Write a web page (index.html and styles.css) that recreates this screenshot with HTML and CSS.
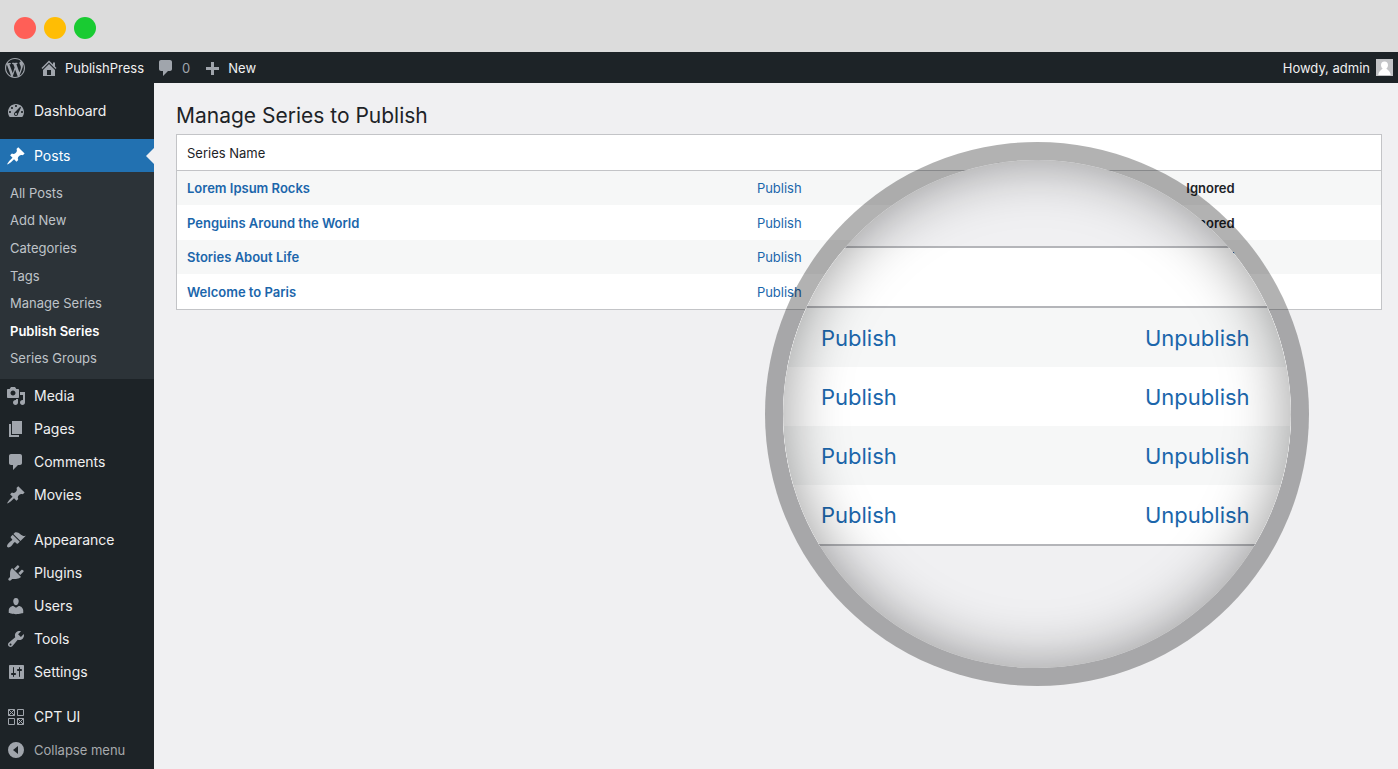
FILE: index.html
```html
<!DOCTYPE html>
<html lang="en">
<head>
  <meta charset="UTF-8">
  <meta name="viewport" content="width=device-width, initial-scale=1.0">
  <title>Manage Series to Publish - PublishPress</title>
  <link rel="stylesheet" href="styles.css">
</head>
<body>

<!-- Window title bar -->
<div class="window-bar">
  <span class="dot dot-red"></span>
  <span class="dot dot-yellow"></span>
  <span class="dot dot-green"></span>
</div>

<!-- Admin bar -->
<header class="admin-bar">
  <a href="#" class="bar-logo" aria-label="WordPress"><svg class="icon" viewBox="0 0 20 20"><path d="M20 10c0-5.51-4.49-10-10-10C4.48 0 0 4.49 0 10c0 5.52 4.48 10 10 10 5.51 0 10-4.48 10-10zM7.78 15.37L4.37 6.22c.55-.02 1.17-.08 1.17-.08.5-.06.44-1.13-.06-1.11 0 0-1.45.11-2.37.11-.18 0-.37 0-.58-.01C4.12 2.69 6.87 1.11 10 1.11c2.33 0 4.45.87 6.05 2.34-.68-.11-1.65.39-1.65 1.58 0 .74.45 1.36.9 2.1.35.61.55 1.36.55 2.46 0 1.49-1.4 5-1.4 5l-3.03-8.37c.54-.02.82-.17.82-.17.5-.05.44-1.25-.06-1.22 0 0-1.44.12-2.38.12-.87 0-2.33-.12-2.33-.12-.5-.03-.56 1.2-.06 1.22l.92.08 1.26 3.41zM17.41 10c.24-.64.74-1.87.43-4.25.7 1.29 1.05 2.71 1.05 4.25 0 3.29-1.73 6.24-4.4 7.78.97-2.59 1.94-5.2 2.92-7.78zM6.1 18.09C3.12 16.65 1.11 13.53 1.11 10c0-1.3.23-2.48.72-3.59C3.25 10.3 4.67 14.2 6.1 18.09zm4.03-6.63l2.58 6.98c-.86.29-1.76.45-2.71.45-.79 0-1.57-.11-2.29-.33.81-2.38 1.62-4.74 2.42-7.1z"/></svg></a>
  <a href="#"><svg class="icon" viewBox="0 0 20 20"><path d="M16 8.5l1.53 1.53-1.06 1.06L10 4.6l-6.47 6.49-1.06-1.06L10 2.5l4 4v-2h2v4zm-6-2.46l6 5.99V18H4v-5.97zM12 17v-5H8v5h4z"/></svg>PublishPress</a>
  <a href="#" class="bar-count"><svg class="icon" viewBox="0 0 20 20"><path d="M5 2h9c1.1 0 2 .9 2 2v7c0 1.1-.9 2-2 2h-2l-5 5v-5H5c-1.1 0-2-.9-2-2V4c0-1.1.9-2 2-2z"/></svg>0</a>
  <a href="#"><svg class="icon" viewBox="0 0 20 20"><path d="M17 9v3h-5v5H9v-5H4V9h5V4h3v5z"/></svg>New</a>
  <a href="#" class="bar-account">Howdy, admin
    <svg class="avatar" viewBox="0 0 17 17"><path fill="#c3c4c7" d="M0 0h17v17H0z"/><path fill="#fff" d="M8.500 2.500c2.300 0 3.600 1.700 3.500 3.700-.1 1.500-.7 2.600-1.600 3.300.2 1 3.900 2 4.300 6.500H2.300c.4-4.500 4.100-5.500 4.300-6.500C5.700 8.800 5.100 7.700 5 6.200c-.1-2 1.200-3.700 3.500-3.700z"/></svg>
  </a>
</header>

<div class="layout">
  <!-- Sidebar menu -->
  <nav class="sidebar">
    <ul class="menu">
      <li><a href="#"><svg class="icon" viewBox="0 0 20 20"><path fill-rule="evenodd" d="M3.760 16h12.480c1.100-1.370 1.760-3.110 1.760-5 0-4.420-3.580-8-8-8s-8 3.580-8 8c0 1.890.66 3.630 1.760 5zM10 4c.55 0 1 .45 1 1s-.45 1-1 1-1-.45-1-1 .45-1 1-1zM6 6c.55 0 1 .45 1 1s-.45 1-1 1-1-.45-1-1 .45-1 1-1zm8.200-.2l.8.700L12 13c0 1.100-.9 2-2 2s-2-.9-2-2c0-.57.24-1.080.63-1.450zM4 10c.55 0 1 .45 1 1s-.45 1-1 1-1-.45-1-1 .45-1 1-1zm12 0c.55 0 1 .45 1 1s-.45 1-1 1-1-.45-1-1 .45-1 1-1zm-5 3c0-.55-.45-1-1-1s-1 .45-1 1 .45 1 1 1 1-.45 1-1z"/></svg>Dashboard</a></li>
    </ul>

    <ul class="menu">
      <li>
        <a href="#" class="current"><svg class="icon" viewBox="0 0 20 20"><path d="M10.440 3.020l1.820-1.820 6.360 6.350-1.830 1.820c-1.050-.68-2.480-.57-3.410.36l-.75.75c-.92.93-1.040 2.350-.35 3.410l-1.830 1.820-2.410-2.410-2.800 2.790c-.42.42-3.380 2.710-3.800 2.290s1.860-3.390 2.280-3.810l2.790-2.790L4.100 9.360l1.830-1.820c1.050.69 2.480.57 3.400-.36l.75-.75c.93-.92 1.050-2.350.36-3.410z"/></svg>Posts</a>
        <ul class="submenu">
          <li><a href="#">All Posts</a></li>
          <li><a href="#">Add New</a></li>
          <li><a href="#">Categories</a></li>
          <li><a href="#">Tags</a></li>
          <li><a href="#">Manage Series</a></li>
          <li><a href="#" class="active">Publish Series</a></li>
          <li><a href="#">Series Groups</a></li>
        </ul>
      </li>
      <li><a href="#"><svg class="icon" viewBox="0 0 20 20"><path d="M13 11V4c0-.55-.45-1-1-1h-1.670L9 1H5L3.670 3H2c-.55 0-1 .45-1 1v7c0 .55.45 1 1 1h10c.55 0 1-.45 1-1zM7 4.500c1.380 0 2.500 1.120 2.500 2.500S8.380 9.500 7 9.500 4.500 8.380 4.500 7 5.620 4.500 7 4.500zM14 6h5v10.500c0 1.380-1.120 2.500-2.500 2.500S14 17.880 14 16.500s1.120-2.500 2.500-2.500c.17 0 .34.02.5.05V9h-3V6zm-4 8.050V13h2v3.500c0 1.380-1.120 2.500-2.500 2.500S7 17.880 7 16.500 8.120 14 9.500 14c.17 0 .34.02.5.05z"/></svg>Media</a></li>
      <li><a href="#"><svg class="icon" viewBox="0 0 20 20"><path d="M6 15V2h10v13H6zm-1 1h8v2H3V5h2v11z"/></svg>Pages</a></li>
      <li><a href="#"><svg class="icon" viewBox="0 0 20 20"><path d="M5 2h9c1.100 0 2 .9 2 2v7c0 1.100-.9 2-2 2h-2l-5 5v-5H5c-1.100 0-2-.9-2-2V4c0-1.100.9-2 2-2z"/></svg>Comments</a></li>
      <li><a href="#"><svg class="icon" viewBox="0 0 20 20"><path d="M10.440 3.020l1.820-1.820 6.360 6.350-1.830 1.820c-1.050-.68-2.480-.57-3.410.36l-.75.75c-.92.93-1.040 2.350-.35 3.410l-1.830 1.820-2.410-2.410-2.800 2.790c-.42.42-3.380 2.710-3.800 2.290s1.860-3.390 2.280-3.810l2.790-2.790L4.100 9.360l1.830-1.820c1.050.69 2.480.57 3.400-.36l.75-.75c.93-.92 1.050-2.350.36-3.410z"/></svg>Movies</a></li>
    </ul>

    <ul class="menu">
      <li><a href="#"><svg class="icon" viewBox="0 0 20 20"><path d="M14.480 11.060L7.410 3.990l1.500-1.500c.5-.56 2.300-.47 3.510.32 1.210.8 1.430 1.280 2.910 2.100 1.180.64 2.450 1.260 4.450.85zm-.71.71L6.700 4.700 4.930 6.470c-.39.39-.39 1.020 0 1.410l1.060 1.060c.39.39.39 1.030 0 1.420-.6.6-1.430 1.110-2.210 1.690-.35.26-.7.53-1.010.84C1.430 14.230.4 16.080 1.400 17.070c.99 1 2.840-.03 4.180-1.360.31-.31.58-.66.85-1.020.57-.78 1.080-1.610 1.690-2.210.39-.39 1.020-.39 1.410 0l1.060 1.060c.39.39 1.020.39 1.410 0z"/></svg>Appearance</a></li>
      <li><a href="#"><svg class="icon" viewBox="0 0 20 20"><path d="M13.110 4.360L9.870 7.600 8 5.730l3.240-3.240c.35-.34 1.050-.2 1.560.32.52.51.66 1.210.31 1.550zm-8 1.770l.91-1.120 9.010 9.010-1.190.84c-.71.71-2.630 1.160-3.820 1.160H6.140L4.900 17.260c-.59.59-1.540.59-2.120 0-.59-.58-.59-1.530 0-2.120l1.240-1.240v-3.880c0-1.130.4-3.190 1.090-3.890zm7.260 3.970l3.240-3.240c.34-.35 1.040-.21 1.550.31.52.51.66 1.210.31 1.550l-3.240 3.250z"/></svg>Plugins</a></li>
      <li><a href="#"><svg class="icon" viewBox="0 0 20 20"><path d="M10 9.250c-2.270 0-2.730-3.440-2.730-3.440C7 4.020 7.820 2 9.970 2c2.160 0 2.980 2.020 2.710 3.810 0 0-.41 3.440-2.680 3.440zm0 2.570L12.720 10c2.390 0 4.520 2.330 4.520 4.530v2.490s-3.650 1.130-7.240 1.130c-3.650 0-7.240-1.130-7.240-1.130v-2.490c0-2.250 1.940-4.480 4.470-4.480z"/></svg>Users</a></li>
      <li><a href="#"><svg class="icon" viewBox="0 0 20 20"><path d="M16.680 9.770c-1.340 1.340-3.300 1.670-4.950.99l-5.410 6.520c-.99.99-2.590.99-3.580 0s-.99-2.590 0-3.570l6.520-5.420c-.68-1.650-.35-3.610.99-4.950 1.280-1.280 3.120-1.620 4.720-1.060l-2.890 2.890 2.820 2.820 2.860-2.870c.53 1.580.18 3.390-1.080 4.650zM3.810 16.210c.4.39 1.040.39 1.430 0 .4-.4.4-1.040 0-1.430-.39-.4-1.030-.4-1.430 0-.39.39-.39 1.030 0 1.430z"/></svg>Tools</a></li>
      <li><a href="#"><svg class="icon" viewBox="0 0 20 20"><path fill-rule="evenodd" d="M18 16V4c0-.55-.45-1-1-1H4c-.55 0-1 .45-1 1v12c0 .55.45 1 1 1h13c.55 0 1-.45 1-1zM8 11h1c.55 0 1 .45 1 1s-.45 1-1 1H8v1.500c0 .28-.22.5-.5.5s-.5-.22-.5-.5V13H6c-.55 0-1-.45-1-1s.45-1 1-1h1V5.500c0-.28.22-.5.5-.5s.5.22.5.5V11zm5-2h-1c-.55 0-1-.45-1-1s.45-1 1-1h1V5.500c0-.28.22-.5.5-.5s.5.22.5.5V7h1c.55 0 1 .45 1 1s-.45 1-1 1h-1v5.500c0 .28-.22.5-.5.5s-.5-.22-.5-.5V9z"/></svg>Settings</a></li>
    </ul>

    <ul class="menu">
      <li><a href="#"><svg class="icon icon-line" viewBox="0 0 20 20"><path d="M2.500 2.500h6v6h-6zM11.500 2.500h6v6h-6zM2.500 11.500h6v6h-6zM11.500 11.500h6v6h-6zM2.500 2.500l6 6M8.500 2.500l-6 6M11.500 11.500l6 6M17.500 11.500l-6 6"/></svg>CPT UI</a></li>
      <li><button type="button" class="collapse-button"><svg class="icon" viewBox="0 0 20 20"><path fill-rule="evenodd" d="M10 2a8 8 0 1 1 0 16 8 8 0 0 1 0-16zm2 4l-5 4 5 4z"/></svg>Collapse menu</button></li>
    </ul>
  </nav>

  <!-- Page content -->
  <main class="content">
    <h1>Manage Series to Publish</h1>
    <table class="series-table">
      <thead>
        <tr>
          <th class="col-name">Series Name</th>
          <th class="col-publish"></th>
          <th class="col-unpublish"></th>
          <th class="col-ignored"></th>
        </tr>
      </thead>
      <tbody>
        <tr>
          <td><a href="#" class="series-link">Lorem Ipsum Rocks</a></td>
          <td><a href="#">Publish</a></td>
          <td></td>
          <td><strong>Ignored</strong></td>
        </tr>
        <tr>
          <td><a href="#" class="series-link">Penguins Around the World</a></td>
          <td><a href="#">Publish</a></td>
          <td></td>
          <td><strong>Ignored</strong></td>
        </tr>
        <tr>
          <td><a href="#" class="series-link">Stories About Life</a></td>
          <td><a href="#">Publish</a></td>
          <td></td>
          <td><strong>Ignored</strong></td>
        </tr>
        <tr>
          <td><a href="#" class="series-link">Welcome to Paris</a></td>
          <td><a href="#">Publish</a></td>
          <td></td>
          <td></td>
        </tr>
      </tbody>
    </table>

    <!-- Magnifying lens over the table -->
    <div class="lens">
      <table class="lens-table">
        <thead>
          <tr><th class="lens-publish"></th><th></th></tr>
        </thead>
        <tbody>
          <tr><td><a href="#">Publish</a></td><td><a href="#">Unpublish</a></td></tr>
          <tr><td><a href="#">Publish</a></td><td><a href="#">Unpublish</a></td></tr>
          <tr><td><a href="#">Publish</a></td><td><a href="#">Unpublish</a></td></tr>
          <tr><td><a href="#">Publish</a></td><td><a href="#">Unpublish</a></td></tr>
        </tbody>
      </table>
    </div>
  </main>
</div>

</body>
</html>
```
FILE: styles.css
```css
* {
  box-sizing: border-box;
}
body {
  display: flex;
  flex-direction: column;
  min-height: 100vh;
  margin: 0;
  background-color: #f0f0f2;
  color: #1d2327;
  font-family: Inter, "Liberation Sans", sans-serif;
  font-size: 13px;
}
a {
  color: #1b66ab;
  text-decoration: none;
}
ul {
  margin: 0;
  padding: 0;
  list-style: none;
}
.icon {
  flex: none;
  width: 20px;
  height: 20px;
  fill: #a0a5ac;
}
.icon-line {
  fill: none;
  stroke: #a0a5ac;
}

/* Window title bar */
.window-bar {
  display: flex;
  align-items: center;
  gap: 8px;
  height: 52px;
  padding: 3px 14px 0;
  background-color: #dcdcdc;
}
.dot {
  width: 22px;
  height: 22px;
  border-radius: 50%;
}
.dot-red {
  background-color: #ff5f57;
}
.dot-yellow {
  background-color: #ffbd04;
}
.dot-green {
  background-color: #19cb32;
}

/* Admin bar */
.admin-bar {
  display: flex;
  align-items: center;
  gap: 12px;
  height: 31px;
  padding: 0 5px;
  background-color: #1d2327;
}
.admin-bar a {
  display: flex;
  align-items: center;
  gap: 6px;
  color: #f0f0f1;
}
.admin-bar .bar-logo {
  padding-right: 2px;
}
.admin-bar .bar-count {
  color: #a0a5ac;
}
.admin-bar .bar-account {
  margin-left: auto;
}
.avatar {
  width: 17px;
  height: 17px;
}

/* Sidebar */
.layout {
  display: flex;
  flex: 1;
}
.sidebar {
  display: flex;
  flex: none;
  flex-direction: column;
  gap: 12px;
  width: 154px;
  padding-top: 11px;
  background-color: #1d2327;
  font-size: 14px;
}
.menu > li > a,
.collapse-button {
  display: flex;
  align-items: center;
  gap: 8px;
  width: 100%;
  height: 33px;
  padding: 0 6px;
  color: #f0f0f1;
}
.menu > li > .current {
  position: relative;
  background-color: #2271b1;
  color: #fff;
}
.current .icon {
  fill: #fff;
}
.current::after {
  content: "";
  position: absolute;
  top: 9px;
  right: 0;
  border: 8px solid transparent;
  border-left-width: 0;
  border-right-color: #f0f0f2;
}
.menu > li > .collapse-button {
  border: none;
  background: none;
  color: #a7aaad;
  font: inherit;
  font-size: 13px;
  cursor: pointer;
}
.submenu {
  display: flex;
  flex-direction: column;
  height: 207px;
  padding: 7px 10px;
  background-color: #2c3338;
  font-size: 13px;
}
.submenu li {
  display: flex;
  flex: 1;
  align-items: center;
}
.submenu a {
  color: #bfc3c8;
}
.submenu .active {
  color: #fff;
  font-weight: 600;
}

/* Content */
.content {
  position: relative;
  flex: 1;
  padding: 17px 16px 0 22px;
}
h1 {
  margin: 0 0 2px;
  font-size: 21px;
  font-weight: 400;
  line-height: 32px;
}
.series-table {
  width: 100%;
  border: 1px solid #c3c4c7;
  border-spacing: 0;
  background-color: #fff;
  table-layout: fixed;
}
.series-table th,
.series-table td {
  height: 34px;
  padding: 0 10px;
  font-weight: 400;
  text-align: left;
}
.series-table th {
  height: 36px;
  border-bottom: 1px solid #c3c4c7;
}
.series-table td:nth-child(2) {
  padding-left: 14px;
}
.series-table tr:nth-child(even) td {
  height: 35px;
}
.series-table tbody tr:nth-child(odd),
.lens-table tbody tr:nth-child(odd) {
  background-color: #f6f7f7;
}
.series-table strong,
.series-link {
  font-weight: 600;
}
.col-name {
  width: 47%;
}
.col-publish,
.col-unpublish {
  width: 18%;
}

/* Lens */
.lens {
  position: absolute;
  top: 59px;
  right: 89px;
  width: 544px;
  height: 544px;
  padding-top: 86px;
  border: 18px solid rgba(0, 0, 0, 0.3);
  border-radius: 50%;
  background-color: #f0f0f2;
  background-clip: padding-box;
  overflow: hidden;
}
.lens::after {
  content: "";
  position: absolute;
  inset: 0;
  border-radius: 50%;
  box-shadow: inset 0 0 60px rgba(0, 0, 0, 0.4);
  pointer-events: none;
}
.lens-table {
  width: 100%;
  border-top: 2px solid #b4b5b9;
  border-bottom: 2px solid #b4b5b9;
  border-spacing: 0;
  background-color: #fff;
  font-size: 22px;
  table-layout: fixed;
}
.lens-table th {
  height: 60px;
  border-bottom: 2px solid #b4b5b9;
}
.lens-table td {
  height: 59px;
  padding: 0 0 0 38px;
}
.lens-publish {
  width: 324px;
}
```
